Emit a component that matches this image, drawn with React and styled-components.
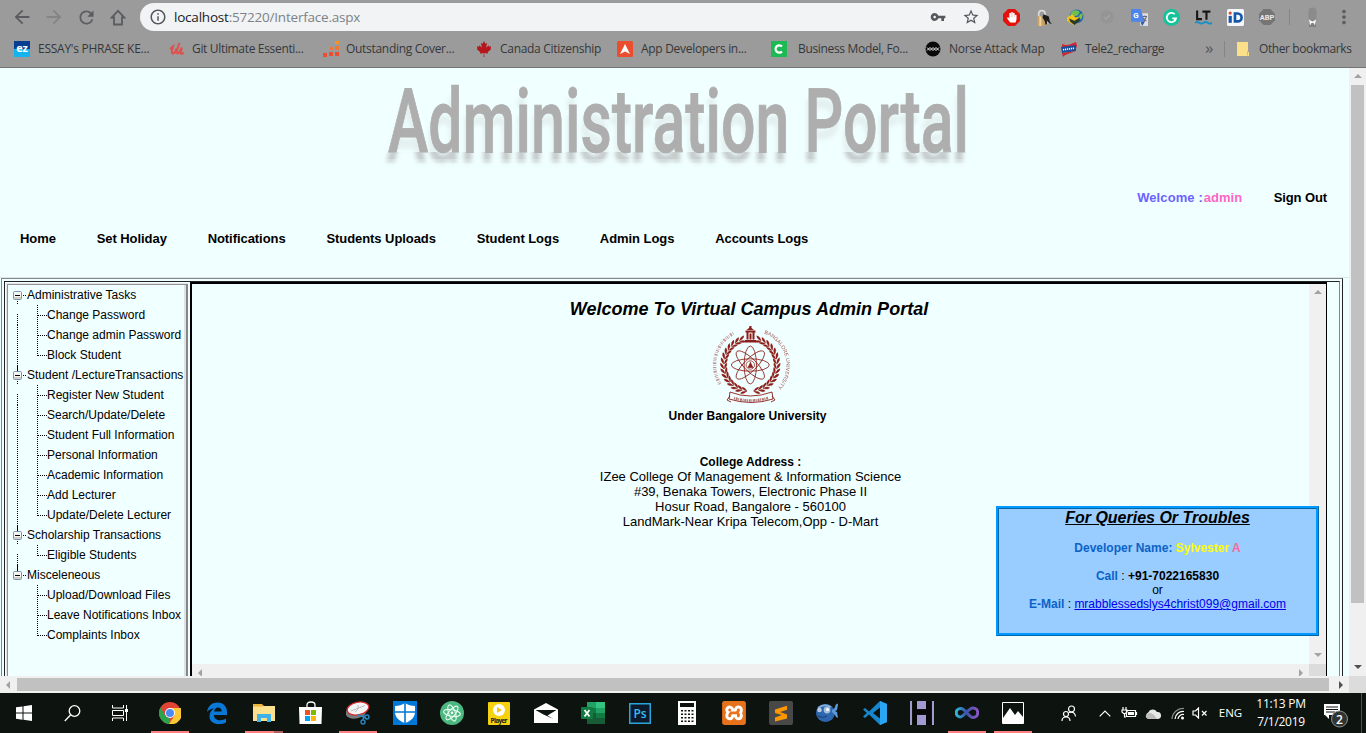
import React from "react";
import styled, { createGlobalStyle, css } from "styled-components";
import {
  MdArrowBack, MdArrowForward, MdRefresh, MdInfoOutline,
  MdVpnKey, MdStarBorder, MdMoreVert,
} from "react-icons/md";
import { FaCanadianMapleLeaf, FaHandPaper } from "react-icons/fa";
import { SiXampp } from "react-icons/si";

const UI = `"Open Sans", "Noto Sans", sans-serif`;
const ARIAL = `"Liberation Sans", Arial, sans-serif`;

const Global = createGlobalStyle`
  * { box-sizing: border-box; }
  html, body { margin: 0; padding: 0; overflow: hidden; }
  body { width: 1366px; height: 733px; font-family: ${ARIAL}; color: #000; }
  svg { display: block; flex: none; }
`;

const Screen = styled.div`
  width: 1366px;
  height: 733px;
  display: flex;
  flex-direction: column;
  overflow: hidden;
`;

/* ---------- browser chrome ---------- */

const Toolbar = styled.div`
  height: 34px;
  display: flex;
  align-items: center;
  background: #9b9b9b;
  color: #5a5c5f;
  padding-left: 6px;
`;

const NavButton = styled.span`
  width: 32px;
  height: 22px;
  display: flex;
  align-items: center;
  justify-content: center;
  opacity: ${(p) => (p.$dim ? 0.35 : 1)};
`;

const Omnibox = styled.div`
  width: 849px;
  height: 28px;
  margin: 0 12px 0 6px;
  padding: 0 9px 0 9px;
  border-radius: 14px;
  background: #f1f3f4;
  display: flex;
  align-items: center;
  color: #54575b;
`;

const Url = styled.span`
  flex: 1;
  margin-left: 7px;
  font: 13.5px/18px ${UI};
  letter-spacing: -0.21px;
  color: #7d8287;
  white-space: nowrap;
  b { font-weight: 400; color: #202124; }
`;

const OmniIcon = styled.span`
  margin-left: 16px;
`;

const Extension = styled.span`
  width: 32px;
  height: 20px;
  display: flex;
  align-items: center;
  justify-content: flex-start;
  padding-left: 2px;
`;

const Profile = styled.span`
  width: 43px;
  height: 20px;
`;

const ToolSeparator = styled.i`
  width: 1px;
  height: 16px;
  background: #858585;
`;

const BookmarkBar = styled.div`
  height: 34px;
  padding: 0 0 3px 14px;
  display: flex;
  align-items: center;
  background: #9b9b9b;
  border-bottom: 1px solid #737575;
`;

const Bookmark = styled.div`
  width: ${(p) => p.$w}px;
  display: flex;
  align-items: center;
  font: 12px/16px ${UI};
  letter-spacing: ${(p) => p.$ls || -0.3}px;
  color: #35373a;
  white-space: nowrap;
  svg { margin-right: ${(p) => p.$gap || 8}px; }
`;

const Chevrons = styled.span`
  width: 19px;
  color: #55575a;
  font: 17px/16px ${UI};
  padding-bottom: 3px;
`;

const Fav = ({ children, size = 16, box = "0 0 16 16" }) => (
  <svg width={size} height={size} viewBox={box}>{children}</svg>
);

function Browser() {
  return (
    <>
      <Toolbar>
        <NavButton><MdArrowBack size={22} /></NavButton>
        <NavButton $dim><MdArrowForward size={22} /></NavButton>
        <NavButton><MdRefresh size={21} /></NavButton>
        <NavButton>
          <svg width="16" height="17" viewBox="0 0 16 17">
            <path d="M8 1.800L1.800 8.500H4v7h8v-7h2.200z" fill="none" stroke="currentColor" strokeWidth="1.800" />
          </svg>
        </NavButton>
        <Omnibox>
          <MdInfoOutline size={18} />
          <Url><b>localhost</b>:57220/Interface.aspx</Url>
          <OmniIcon><MdVpnKey size={16} /></OmniIcon>
          <OmniIcon><MdStarBorder size={18} /></OmniIcon>
        </Omnibox>
        <Extension>
          <Fav size={17}>
            <path d="M4.700 0h6.600L16 4.700v6.600L11.300 16H4.700L0 11.300V4.700z" fill="#e3120b" />
            <g transform="translate(3.300 2.800) scale(.56)"><FaHandPaper size={18} color="#fff" /></g>
          </Fav>
        </Extension>
        <Extension>
          <Fav size={17}>
            <path d="M3.500 7V4.500a3 3 0 0 1 6 0V7" fill="none" stroke="#d9d9d9" strokeWidth="1.600" />
            <path d="M2 7h8v9H2z" fill="#c9a063" /><path d="M4 7h2v9H4z" fill="#ecd29c" />
            <path d="M8 5l5 2 1 5 2 2-4-1-2 2-1-4-2-3z" fill="#1d1d1d" /><path d="M11 11l2 2-1 1z" fill="#fff" />
          </Fav>
        </Extension>
        <Extension>
          <Fav size={17}>
            <circle cx="9" cy="7" r="6.500" fill="#2563b5" />
            <path d="M4 3c3-3 7-2 8 0l-2 3-5 1-2-1z" fill="#6cc04f" /><path d="M12 5l3-1-1 5-4 2z" fill="#7cc142" />
            <path d="M0 8l5-3 3 3 3-1-1 5-4 3-6-4z" fill="#f1c419" /><path d="M2 9l5 2 5-3v3l-5 4-4-3z" fill="#2d3a26" />
          </Fav>
        </Extension>
        <Extension>
          <Fav><circle cx="8" cy="8" r="6.700" fill="#959595" /><path d="M5 8l2 2 4-4" fill="none" stroke="#a3a3a3" strokeWidth="1.500" /></Fav>
        </Extension>
        <Extension>
          <Fav size={17}>
            <path d="M7 4h9v12H9z" fill="#dedede" /><path d="M0 1q0-1 1-1h8l4 12H1q-1 0-1-1z" fill="#4d86e8" />
            <path d="M9 12h4l-2.500 4z" fill="#3159a8" />
            <text x="2" y="8.500" fontSize="7.500" fontWeight="700" fill="#fff" fontFamily="Roboto">G</text>
            <path d="M11 7h4M13 6v1M14.500 7.500L12 12M11.500 8.500l3 3" stroke="#667" fill="none" />
          </Fav>
        </Extension>
        <Extension>
          <Fav size={17}><circle cx="8" cy="8" r="8" fill="#14c39a" /><path d="M11 4.800A4.400 4.400 0 1 0 12.300 8.800H8.800M12.300 8.800l-1.600 2.100" fill="none" stroke="#fff" strokeWidth="1.700" /></Fav>
        </Extension>
        <Extension>
          <Fav size={17}>
            <path d="M2 1.500v8h4.500M7 2.500h7.500M10.800 2.500v7.500" fill="none" stroke="#171717" strokeWidth="2" />
            <path d="M0 13q2-1.500 4 0t4 0 4 0 4 0" fill="none" stroke="#188fc7" strokeWidth="1.700" />
          </Fav>
        </Extension>
        <Extension>
          <Fav size={17}>
            <rect width="16" height="16" rx="1.500" fill="#f5f7fa" />
            <path d="M1.500 6.500h3V13h-3z" fill="#1457a8" /><circle cx="3" cy="3.800" r="1.500" fill="#e44b2e" />
            <path d="M7.500 4.200h2.500a3.700 3.700 0 0 1 0 7.500H7.500z" fill="none" stroke="#1457a8" strokeWidth="2.500" />
          </Fav>
        </Extension>
        <Extension>
          <Fav>
            <path d="M4.700 0h6.600L16 4.700v6.600L11.300 16H4.700L0 11.300V4.700z" fill="#757575" />
            <text x="8" y="10.700" textAnchor="middle" fontSize="7.500" fontWeight="700" fill="#e9e9e9" fontFamily="Roboto">ABP</text>
          </Fav>
        </Extension>
        <ToolSeparator />
        <Profile>
          <svg width="32" height="20" viewBox="0 0 32 20">
            <path d="M18.500 11V4q0-3.500 4-3.500t4 3.500v7q0 2-4 2t-4-2z" fill="#8b8b8b" />
            <path d="M20 13h5l1 3v4h-7v-4z" fill="#808080" /><path d="M19 12.500l3.500 2 3.500-2-1 6-1.500-2.500h-2L20 18.500z" fill="#f4f4f4" />
          </svg>
        </Profile>
        <MdMoreVert size={22} />
      </Toolbar>
      <BookmarkBar>
        <Bookmark $w={155} $ls={-0.26}>
          <Fav><rect width="16" height="8" fill="#063e91" /><rect y="8" width="16" height="8" fill="#16b4ef" />
            <text x="8" y="11" textAnchor="middle" fontSize="11" fontWeight="700" fill="#fff" fontFamily="Open Sans">ez</text></Fav>
          ESSAY's PHRASE KE...
        </Bookmark>
        <Bookmark $w={154} $gap={7} $ls={-0.33}>
          <Fav><path d="M1 8l3-2.500-1.200 5q0 3.500 3 1l2-4M10.500 2L7.800 9.500q-.5 4 2 2.500l3-5.500-1 5q0 3 3 0" fill="none" stroke="#e0504d" strokeWidth="2" /></Fav>
          Git Ultimate Essenti...
        </Bookmark>
        <Bookmark $w={153} $gap={7}>
          <Fav>
            <path d="M12 0h4v3h-4z" fill="#f79320" /><path d="M7 6h3v3H7zM12 5h4v4h-4z" fill="#ee7733" />
            <path d="M0 12h4v4H0zM6 11h4v4H6zM12 11h4v4h-4z" fill="#e94d33" />
          </Fav>
          Outstanding Cover...
        </Bookmark>
        <Bookmark $w={141}><FaCanadianMapleLeaf size={16} color="#b5171c" />Canada Citizenship</Bookmark>
        <Bookmark $w={154}>
          <Fav><rect width="16" height="16" rx="1.500" fill="#ea4e2e" /><path d="M8 3l5 10-5-2.500L3 13z" fill="#fff" /></Fav>
          App Developers in...
        </Bookmark>
        <Bookmark $w={154} $gap={11} $ls={-0.33}>
          <Fav><rect width="16" height="16" fill="#1db954" /><path d="M11 5.500A3.700 3.700 0 1 0 11 10.500" fill="none" stroke="#fff" strokeWidth="2.200" /></Fav>
          Business Model, Fo...
        </Bookmark>
        <Bookmark $w={136} $ls={-0.25}>
          <Fav><circle cx="8" cy="8" r="7.500" fill="#090909" />
            <path d="M2 6.500l3 3 3-3 3 3 3-3M2 9.500l3-3 3 3 3-3 3 3" fill="none" stroke="#fff" strokeWidth=".9" strokeLinejoin="round" /></Fav>
          Norse Attack Map
        </Bookmark>
        <Bookmark $w={144} $ls={-0.4}>
          <Fav><path d="M1 3q5 2 9 0l5-2 1 4-1 2H1z" fill="#d4272e" /><path d="M0 6l15-2v6L1 12z" fill="#1b4f9e" /><path d="M1 12l14-2-11 4-2 2z" fill="#c9272d" /><path d="M2 8.800l11-1.600" stroke="#fff" strokeWidth="1.600" strokeDasharray="1.200 .8" /></Fav>
          Tele2_recharge
        </Bookmark>
        <Chevrons>»</Chevrons>
        <ToolSeparator />
        <Bookmark $w={140} $gap={6} $ls={-0.4}>
          <svg width="28" height="16" viewBox="0 0 28 16"><path d="M12 1h11v10h1v4H12z" fill="#fbe08a" /><path d="M22.500 10v4.500" stroke="#e5bd4d" /></svg>
          Other bookmarks
        </Bookmark>
      </BookmarkBar>
    </>
  );
}

/* ---------- scroll bars ---------- */

const VBar = styled.div`
  width: 17px;
  flex: none;
  display: flex;
  flex-direction: column;
  align-items: center;
  justify-content: space-between;
  background: #f0f0f0;
  padding: 6px 0 7px;
`;
const VThumb = styled.div`
  width: 13px;
  height: 518px;
  margin: 7px 0 auto;
  background: #c1c1c1;
`;
const HBar = styled.div`
  height: 17px;
  flex: none;
  display: flex;
  align-items: center;
  justify-content: space-between;
  background: #f0f0f0;
`;
const HThumb = styled.div`
  width: 1312px;
  height: 13px;
  margin: 0 auto 0 1px;
  background: #c1c1c1;
`;
const Corner = styled.div`
  width: 17px;
  height: 17px;
  background: #dcdcdc;
`;
const Arrow = styled.i`
  width: 0;
  height: 0;
  border: 4px solid transparent;
  ${(p) => p.$dir === "up" && css`border-top: 0; border-bottom-color: ${p.$c};`}
  ${(p) => p.$dir === "down" && css`border-bottom: 0; border-top-color: ${p.$c};`}
  ${(p) => p.$dir === "left" && css`border-left: 0; border-right-color: ${p.$c}; margin: 0 6px;`}
  ${(p) => p.$dir === "right" && css`border-right: 0; border-left-color: ${p.$c}; margin: 0 6px;`}
`;

/* ---------- web page ---------- */

const Viewport = styled.div`
  height: 608px;
  flex: none;
  display: flex;
  background: #f0ffff;
`;
const Page = styled.div`
  width: 1349px;
  height: 608px;
  overflow: hidden;
  display: flex;
  flex-direction: column;
`;
const Banner = styled.header`
  height: 120px;
  padding-left: 380px;
`;
const Account = styled.div`
  height: 20px;
  display: flex;
  align-items: center;
  justify-content: flex-end;
  padding-right: 22px;
  font: bold 13px/20px ${ARIAL};
  letter-spacing: -0.1px;
`;
const Greeting = styled.span`
  color: #6c63ff;
  letter-spacing: 0.1px;
  margin-right: 1px;
`;
const UserName = styled.span`
  color: #ff66c4;
  letter-spacing: 0;
  margin-right: 31.5px;
`;
const Menu = styled.nav`
  height: 70px;
  padding: 22px 0 0 20px;
  display: flex;
  gap: 40.8px;
  font: bold 13px/18px ${ARIAL};
  letter-spacing: -0.06px;
  border-bottom: 1px solid #dbe6e6;
`;
const OuterFrame = styled.div`
  width: 1342px;
  margin-left: 1px;
  flex: 1;
  min-height: 0;
  border: 1px solid #85868a;
  border-right-color: #222;
  border-bottom: 0;
  padding: 2px 2px 0;
`;
const InnerFrame = styled.div`
  height: 100%;
  display: flex;
  border: 1px solid #222;
  border-right-color: #85868a;
  border-bottom: 0;
`;
const Sidebar = styled.aside`
  width: 182px;
  margin-left: 1px;
  margin-top: 1px;
  border: solid #e6e6e6;
  border-width: 1px 0 0 1px;
  border-right: 0;
`;
const Tree = styled.div`
  height: 100%;
  border: 1px solid #929292;
  border-right: 2px solid #85868a;
  border-bottom: 0;
  box-shadow: inset -2px 0 #dfe2e2;
`;
const TreeRow = styled.div`
  height: 20px;
  display: flex;
  align-items: center;
  font: 12px/20px ${ARIAL};
  white-space: nowrap;
  margin-left: -1px;
`;

const dots = { stroke: "#000", strokeWidth: 1, strokeDasharray: "1 1", fill: "none" };

const Trunk = ({ from = 0 }) => (
  <svg width="20" height="20"><path d={`M10.500 ${from}V20`} {...dots} /></svg>
);
const Blank = styled.span`
  width: 20px;
`;
const Branch = ({ last }) => (
  <svg width="20" height="20">
    <path d={`M10.500 0V${last ? 11 : 20}`} {...dots} />
    <path d="M11 10.500H20" {...dots} />
  </svg>
);
const Toggle = ({ first, last }) => (
  <svg width="20" height="20">
    {!first && <path d="M10.500 0V6" stroke="#000" />}
    {!last && <path d="M10.500 16V20" {...dots} />}
    <path d="M16 10.500H20" {...dots} />
    <rect x="6.500" y="6.500" width="8" height="8" rx="1" fill="#f4f4f0" stroke="#7595bb" />
    <path d="M7 12h7v2H7z" fill="#cfccc2" />
    <path d="M8 10.500H13" stroke="#000" />
  </svg>
);

const groups = [
  ["Administrative Tasks", ["Change Password", "Change admin Password", "Block Student"]],
  ["Student /LectureTransactions", [
    "Register New Student", "Search/Update/Delete", "Student Full Information",
    "Personal Information", "Academic Information", "Add Lecturer", "Update/Delete Lecturer"]],
  ["Scholarship Transactions", ["Eligible Students"]],
  ["Misceleneous", ["Upload/Download Files", "Leave Notifications Inbox", "Complaints Inbox"]],
];

const Frame = styled.section`
  position: relative;
  width: 1137px;
  margin-left: 2px;
  border: 2px solid #000;
  border-right-width: 1px;
  border-bottom: 0;
  display: flex;
  flex-direction: column;
`;
const FrameTop = styled.div`
  height: 380px;
  flex: none;
  display: flex;
`;
const Welcome = styled.main`
  flex: 1;
  display: flex;
  flex-direction: column;
  align-items: center;
  padding-top: 14px;
`;
const Heading = styled.h1`
  margin: 0 3px 5px 0;
  font: italic bold 18px/22px ${ARIAL};
  letter-spacing: 0.02px;
  white-space: nowrap;
`;
const Affiliation = styled.p`
  margin: 2.5px 6px 0 0;
  font: bold 12px/15px ${ARIAL};
`;
const Address = styled.address`
  margin-top: 31.5px;
  text-align: center;
  font: normal 12px/15px ${ARIAL};
  white-space: nowrap;
  b { display: block; height: 14px; }
  div { font-size: 13px; }
`;
const QueryBox = styled.div`
  position: absolute;
  right: 7px;
  top: 222px;
  width: 323px;
  height: 130px;
  border: 3px ridge #0099ff;
  background: #99ccff;
  text-align: center;
  font: 12px/14px ${ARIAL};
  color: #000;
  white-space: nowrap;
  display: flex;
  flex-direction: column;
`;
const QueryTitle = styled.div`
  font: italic bold 16px/18px ${ARIAL};
  text-decoration: underline;
  margin-bottom: 14px;
`;
const Label = styled.span`
  color: #0b63c9;
  font-weight: ${(p) => (p.$plain ? 400 : 700)};
`;
const Line = styled.div`
  margin-bottom: ${(p) => (p.$gap ? 14 : 0)}px;
`;
const Mail = styled.span`
  color: #0000ee;
  text-decoration: underline;
`;
const Yellow = styled.span`
  color: #ffff00;
`;
const Pink = styled.span`
  color: #ff6699;
`;

function PortalLogo() {
  return (
    <svg width="600" height="118" viewBox="0 0 600 118">
      <defs>
        <filter id="reflect" filterUnits="userSpaceOnUse" x="0" y="0" width="600" height="118">
          <feOffset in="SourceAlpha" dx="-2" dy="11" result="o" />
          <feGaussianBlur in="o" stdDeviation="2" result="b" />
          <feFlood x="0" y="0" width="600" height="84" floodColor="#9c9696" floodOpacity=".14" result="f1" />
          <feFlood x="0" y="84" width="600" height="7" floodColor="#8c8484" floodOpacity=".42" result="f2" />
          <feFlood x="0" y="91" width="600" height="4" floodColor="#8c8484" floodOpacity=".3" result="f3" />
          <feFlood x="0" y="95" width="600" height="12" floodColor="#9c9696" floodOpacity=".16" result="f4" />
          <feMerge result="f"><feMergeNode in="f1" /><feMergeNode in="f2" /><feMergeNode in="f3" /><feMergeNode in="f4" /></feMerge>
          <feComposite in="f" in2="b" operator="in" result="s" />
          <feMerge><feMergeNode in="s" /><feMergeNode in="SourceGraphic" /></feMerge>
        </filter>
      </defs>
      <text x="8" y="84" fontSize="89" fontWeight="500" textLength="581" lengthAdjust="spacingAndGlyphs"
        fontFamily="Roboto, sans-serif" fill="#aeaeae" stroke="#aeaeae" strokeWidth=".8" filter="url(#reflect)">Administration Portal</text>
    </svg>
  );
}

function Emblem() {
  const red = "#8c1d18";
  const leaves = [];
  for (let i = 0; i < 15; i++) {
    const a = 20 + i * 10.600;
    [a, -a].forEach((d, k) => {
      const s = k ? -1 : 1;
      leaves.push(
        <g key={`${i}${k}`} transform={`rotate(${d} 38.300 40) translate(38.300 13.500)`}>
          <path d={`M${s * 2} 0q${s * -3} -4 ${s * -6} -3.200q${s * 1} 3 ${s * 6} 3.200zM${s * 2} .4q${s * -3} 3.600 ${s * -6} 2.600q${s * 1.500} -2.600 ${s * 6} -2.600z`} fill={red} stroke={red} strokeWidth=".3" />
        </g>
      );
    });
  }
  return (
    <svg width="78" height="81" viewBox="0 0 78 81">
      <defs><path id="ring" d="M52 8.500A33.500 33.500 0 0 1 62 66" /></defs>
      {leaves}
      {[0, 45, 90, 135].map((r) => (
        <ellipse key={r} cx="38.300" cy="40" rx="19" ry="6.200" fill="none" stroke={red} strokeWidth=".85" transform={`rotate(${r} 38.300 40)`} />
      ))}
      <circle cx="38.300" cy="40" r="4.200" fill="#f0ffff" stroke={red} strokeWidth=".7" />
      <path d="M36 42.500h5l-2.500-5zM38.300 36.500v3" fill={red} stroke={red} strokeWidth=".6" />
      <path d="M37.500 1h2v2l2.500 2h-7.500l2.500-2zM33.500 5.500h10v2h-10zM34.500 7.500h2v7h-2zM40.500 7.500h2v7h-2zM37.500 8.500h2v6h-2zM33 15h11v2.500H33z" fill={red} />
      <text fontSize="5.200" fill={red} opacity=".8" fontFamily="Liberation Sans"><textPath href="#ring" textLength="66">BANGALORE UNIVERSITY</textPath></text>
      <path d="M8 59A36 36 0 0 1 22 8" fill="none" stroke={red} strokeWidth="3.400" strokeDasharray="1 1 .5 1.400 1.800 1.200 .6 1" opacity=".45" />
      <path d="M18 67q20 8 42 0l1 7q-22 7-44 0zM18 71l-3 4 4 2M60 71l3 4-4 2" fill="none" stroke={red} strokeWidth=".9" />
      <path d="M22 73q16 5 34 0" fill="none" stroke={red} strokeWidth="2.500" strokeDasharray="1 .8 2 .6" opacity=".6" />
    </svg>
  );
}

function WebPage() {
  return (
    <Viewport>
      <Page>
        <Banner><PortalLogo /></Banner>
        <Account>
          <Greeting>Welcome :</Greeting><UserName>admin</UserName><span>Sign Out</span>
        </Account>
        <Menu>
          {["Home", "Set Holiday", "Notifications", "Students Uploads", "Student Logs", "Admin Logs", "Accounts Logs"].map((m) => (
            <span key={m}>{m}</span>
          ))}
        </Menu>
        <OuterFrame>
          <InnerFrame>
            <Sidebar>
              <Tree>
                {groups.map(([name, items], g) => {
                  const last = g === groups.length - 1;
                  return (
                    <React.Fragment key={name}>
                      <TreeRow><Toggle first={g === 0} last={last} />{name}</TreeRow>
                      {items.map((it, i) => (
                        <TreeRow key={it}>
                          {last ? <Blank /> : <Trunk from={i === 0 ? 9 : 0} />}
                          <Branch last={i === items.length - 1} />
                          {it}
                        </TreeRow>
                      ))}
                    </React.Fragment>
                  );
                })}
              </Tree>
            </Sidebar>
            <Frame>
              <FrameTop>
                <Welcome>
                  <Heading>Welcome To Virtual Campus Admin Portal</Heading>
                  <Emblem />
                  <Affiliation>Under Bangalore University</Affiliation>
                  <Address>
                    <b>College Address :</b>
                    <div>IZee College Of Management &amp; Information Science</div>
                    <div>#39, Benaka Towers, Electronic Phase II</div>
                    <div>Hosur Road, Bangalore - 560100</div>
                    <div>LandMark-Near Kripa Telecom,Opp - D-Mart</div>
                  </Address>
                </Welcome>
                <VBar><Arrow $dir="up" $c="#a3a3a3" /><Arrow $dir="down" $c="#a3a3a3" /></VBar>
              </FrameTop>
              <HBar>
                <Arrow $dir="left" $c="#a3a3a3" />
                <HBar><Arrow $dir="right" $c="#a3a3a3" /><Corner /></HBar>
              </HBar>
              <QueryBox>
                <QueryTitle>For Queries Or Troubles</QueryTitle>
                <Line $gap><Label>Developer Name: </Label><b><Yellow>Sylvester</Yellow> <Pink>A</Pink></b></Line>
                <Line><Label>Call</Label> : <b>+91-7022165830</b></Line>
                <Line>or</Line>
                <Line><Label>E-Mail</Label> : <Mail>mrabblessedslys4christ099@gmail.com</Mail></Line>
              </QueryBox>
            </Frame>
          </InnerFrame>
        </OuterFrame>
      </Page>
      <VBar>
        <Arrow $dir="up" $c="#a3a3a3" /><VThumb /><Arrow $dir="down" $c="#505050" />
      </VBar>
    </Viewport>
  );
}

/* ---------- taskbar ---------- */

const Taskbar = styled.footer`
  height: 40px;
  flex: none;
  display: flex;
  background: #0d130f;
  color: #fff;
`;
const underline = {
  one: "linear-gradient(#ff8080, #ff8080)",
  many: "linear-gradient(90deg, #ff8080 29px, #b56060 29px)",
};
const Task = styled.div`
  width: ${(p) => p.$w || 47}px;
  height: 40px;
  display: flex;
  align-items: center;
  justify-content: center;
  background: ${(p) => (p.$open ? `${underline[p.$open]} 50% 100% / 38px 2px no-repeat` : "none")};
`;
const TrayText = styled.div`
  width: ${(p) => p.$w}px;
  font: ${(p) => p.$fs || 12}px/18px ${UI};
  letter-spacing: ${(p) => p.$ls || 0}px;
  text-align: center;
  align-self: center;
  white-space: nowrap;
`;
const Spacer = styled.div`
  width: ${(p) => p.$w}px;
`;
const ShowDesktop = styled.i`
  margin-left: auto;
  width: 5px;
  border-left: 1px solid #4c504d;
`;

const I = ({ children, s = 24, w, h }) => (
  <svg width={w || s} height={h || s} viewBox={`0 0 ${w || s} ${h || s}`}>{children}</svg>
);

const apps = [
  ["one", <I s={22}>
    <circle cx="11" cy="11" r="11" fill="#e14335" />
    <path d="M1.500 5.500L6.200 13.700 11 16.500 10 22A11 11 0 0 1 1.500 5.500z" fill="#2ba24c" />
    <path d="M11 6h10.800A11 11 0 0 1 10 22l5.500-8.500z" fill="#fcc934" />
    <circle cx="11" cy="11" r="5" fill="#fff" /><circle cx="11" cy="11" r="4" fill="#4a8af4" /></I>],
  ["", <I s={22}><path d="M1 10C2 3.500 6.500.5 11.500.5 18 .5 21 5.500 21 10v3H8c0 4 3 5.200 6 5.200 2.500 0 4.500-.7 6-1.700v4c-2 1-4.500 1.500-7 1.500C7 22 3.500 19 3.500 14.200 3.500 10.500 5.500 8 8.200 6.600 5.500 6.800 2.500 8 1 10zM8.200 9.500h7.500C15.700 7 14 5.600 12 5.600S8.500 7.300 8.200 9.500z" fill="#0a78d7" /></I>],
  ["many", <I w={22} h={20}>
    <path d="M0 1h9l2 2H0z" fill="#e9b53a" /><path d="M0 3h22v15H0z" fill="#fbe08e" /><path d="M0 3h10v1H0z" fill="#f3ca57" />
    <path d="M4 11h14v8h-4v-4H8v4H4z" fill="#3fb2e8" /></I>],
  ["", <I w={24} h={24}>
    <path d="M8 7V4q0-3 4-3t4 3v3" fill="none" stroke="#fff" strokeWidth="1.300" /><path d="M0 6h23l-.5 17H.5z" fill="#fff" />
    <path d="M6 9h5v5H6z" fill="#f25022" /><path d="M12 9h5v5h-5z" fill="#7fba00" /><path d="M6 15h5v5H6z" fill="#00a4ef" /><path d="M12 15h5v5h-5z" fill="#ffb900" /></I>],
  ["one", <I w={24} h={24}>
    <ellipse cx="10" cy="11" rx="10.500" ry="6.500" transform="rotate(-12 10 11)" fill="#777c80" />
    <ellipse cx="12" cy="7.500" rx="11" ry="6.300" transform="rotate(-12 12 7.500)" fill="#f4f4f4" stroke="#d52b2b" strokeWidth="1.300" />
    <path d="M5 10L19 4.500M9 11l3-3V4" stroke="#b9bec2" fill="none" />
    <path d="M12 14l6 2 3 2M18 13l-1 6" stroke="#2a86bf" strokeWidth="1.500" fill="none" /><circle cx="21" cy="16" r="2" fill="none" stroke="#2a86bf" strokeWidth="1.400" /><circle cx="17" cy="21" r="2" fill="none" stroke="#2a86bf" strokeWidth="1.400" /></I>],
  ["", <I><path d="M0 0h24v24H0z" fill="#0078d7" /><path d="M12 2c3 2 6 3 10 3v6c0 5-4 9-10 11C6 20 2 16 2 11V5c4 0 7-1 10-3z" fill="#fff" /><path d="M12 2v20M2 11h20" stroke="#0078d7" strokeWidth="1.600" /></I>],
  ["", <I><circle cx="12" cy="12" r="12" fill="#4db780" />
    {[10, 70, 130].map((r) => <ellipse key={r} cx="12" cy="12" rx="8.500" ry="3.300" fill="none" stroke="#e5fff0" strokeWidth="1.100" transform={`rotate(${r} 12 12)`} />)}<circle cx="12" cy="12" r="1.400" fill="#fff" /></I>],
  ["", <I w={22} h={23}><rect width="22" height="23" rx="1" fill="#f5d20e" /><circle cx="11" cy="8" r="6" fill="#fff" /><path d="M9 5l5 3-5 3z" fill="#f2c811" />
    <text x="11" y="20.500" textAnchor="middle" fontSize="6.500" fontWeight="700" fill="#222" fontFamily="Open Sans" textLength="17">Player</text></I>],
  ["", <I w={24} h={20}><path d="M0 6.500L12 0l12 6.500V20H0z" fill="#fff" /><path d="M1.500 7h21l-9 5.500 6 3.500-10-4.500z" fill="#0d130f" /></I>],
  ["", <I w={24} h={22}><path d="M6 0h18v22H6z" fill="#185c37" /><path d="M6 0h9v7H6z" fill="#21a366" /><path d="M15 0h9v6h-9z" fill="#33c481" /><path d="M15 6h9v5h-9z" fill="#21a366" /><path d="M6 6h9v5H6z" fill="#107c41" /><path d="M15 11h9v5h-9z" fill="#107c41" /><rect y="5" width="12" height="12" rx="1" fill="#107c41" />
    <path d="M3.500 8l5 6.500M8.500 8l-5 6.500" stroke="#fff" strokeWidth="1.800" /></I>],
  ["", <I w={22} h={21}><rect x=".75" y=".75" width="20.500" height="19.500" fill="#0c1a2b" stroke="#2ba4dc" strokeWidth="1.500" /><text x="11" y="14.500" textAnchor="middle" fontSize="12" fill="#39bdf5" fontFamily="Open Sans" fontWeight="600">Ps</text></I>],
  ["", <I w={18} h={24}><path d="M0 0h18v24H0z" fill="#fff" /><path d="M2 2h14v4H2z" fill="#0d130f" />
    {[9, 12.500, 16, 19.500].map((y) => <path key={y} d={`M3 ${y}h2v1.600H3zM6.500 ${y}h2v1.600h-2zM10 ${y}h2v1.600h-2zM13.500 ${y}h2v1.600h-2z`} fill="#0d130f" />)}</I>],
  ["", <I><rect x="1" y="1" width="22" height="22" rx="2" fill="#fff" /><SiXampp size={24} color="#e8721c" /></I>],
  ["", <I><rect width="24" height="24" rx="2" fill="#484848" /><g transform="translate(5 4)"><path d="M1 4.500L13 .8v4L6 7l7 2.500v4L1 16.500v-4L8 10 1 8z" fill="#ff9800" /></g></I>],
  ["", <I><ellipse cx="9.500" cy="12" rx="9.500" ry="9" fill="#2c66ae" /><path d="M2 7q6-5 13-1" stroke="#80addc" strokeWidth="2" fill="none" /><path d="M16 9q3-1 3.500-5 2.500-3 2.500 0l-1 5-2 1 2 1 1 6q-2 0-3-3l-3-3z" fill="#5d9bd8" /><circle cx="3.500" cy="9" r="2.300" fill="#b8cbe2" /><circle cx="11" cy="9" r="3.400" fill="#a3bedb" /><circle cx="11.500" cy="8.500" r="1.500" fill="#fff" /><path d="M2 15q5 3 9 0" stroke="#183e70" fill="none" /></I>],
  ["", <I><path d="M17 0l7 3v18l-7 3L6 13.500 2 17 0 15.500 3.800 12 0 8.500 2 7l4 3.500zM17 6.500L10 12l7 5.500z" fill="#1687cc" /><path d="M17 0l7 3v18l-7 3z" fill="#2aa5f2" /></I>],
  ["", <I><path d="M0 0h2v24H0zM22 0h2v24h-2zM7 0h9v8H7zM7 14h9v10H7z" fill="#9f9bd1" /><path d="M3 0h4v24H3zM16 0h5v24h-5zM3 9h18v4H3z" fill="#080808" /></I>, 46],
  ["one", <I w={24} h={14}><defs><linearGradient id="vs"><stop offset="0" stopColor="#30b7d8" /><stop offset=".45" stopColor="#3853a8" /><stop offset="1" stopColor="#8b55c6" /></linearGradient></defs>
    <path d="M12 7C9 3 7 2.500 5.500 2.500a4 4 0 0 0 0 8.500C9 11 13 2 18 2a4.500 4.500 0 0 1 0 9.500c-2.500 0-4-2-6-4.500z" fill="none" stroke="url(#vs)" strokeWidth="3" /></I>, 45],
  ["one", <I w={22} h={22}><path d="M.5.5h21v21H.5z" fill="#0d130f" stroke="#fff" /><path d="M1 16l7-10 5 7 3-4 5 6v6H1z" fill="#fff" /></I>, 46],
];

function Tray() {
  const st = { stroke: "#fff", fill: "none", strokeWidth: 1.2 };
  return (
    <>
      <Spacer $w={23.500} />
      <Task $w={20}><I w={16} h={17}><circle cx="10.500" cy="4" r="3" {...st} /><path d="M8 7.500q6-1.500 6.500 4" {...st} /><circle cx="5" cy="9" r="2.500" {...st} /><path d="M1 16q0-4 4-4t4 4" {...st} /></I></Task>
      <Spacer $w={14} />
      <Task $w={24}><I w={12} h={7}><path d="M.7 6.300L6 1l5.300 5.300" {...st} /></I></Task>
      <Task $w={24}><I w={17} h={12}><path d="M5.500 3.500h9v6h-9zM15.500 5v3" {...st} /><path d="M7 5h6v3H7z" fill="#fff" /><path d="M2 0v3M5 0v3M1 3h5v2l-1.500 1.500h-2L1 5zM3.500 7v3H5" {...st} /></I></Task>
      <Task $w={24}><I w={16} h={11}><path d="M3.500 11a3.500 3.500 0 0 1-.3-6.500A5 5 0 0 1 12 4a3.500 3.500 0 0 1 1 7z" fill="#e8e8e8" /><path d="M4 5q4-1 8 6H3.500Q0 10 1 7z" fill="#bdbdbd" /></I></Task>
      <Task $w={25}><I w={14} h={13}><path d="M1 12A11 11 0 0 1 13 1.500" {...st} stroke="#8b8e8c" /><path d="M4 12a8 8 0 0 1 9-7.500M7 12a5 5 0 0 1 6-4.500" {...st} /><circle cx="11.500" cy="11" r="1.500" fill="#fff" /></I></Task>
      <Task $w={20}><I w={16} h={12}><path d="M1 4h2.500L6.500 1v10L3.500 8H1z" {...st} /><path d="M10 4l4.500 4.500M14.500 4L10 8.500" {...st} /></I></Task>
      <Spacer $w={3} />
      <TrayText $w={35} $fs={11.500}>ENG</TrayText>
      <Spacer $w={3} />
      <TrayText $w={60} $ls={-0.3}>11:13 PM<br />7/1/2019</TrayText>
      <Spacer $w={11} />
      <Task $w={28}><I w={26} h={29}><path d="M1 5h16v11H6v4l-4-4H1z" fill="#fff" /><path d="M3 8h12M3 10.500h12M3 13h9" stroke="#0d130f" /><circle cx="16.500" cy="20" r="8" fill="#303532" stroke="#8d908e" /><text x="16.500" y="24.500" textAnchor="middle" fontSize="12" fontWeight="600" fill="#fff" fontFamily="Open Sans">2</text></I></Task>
      <ShowDesktop />
    </>
  );
}

export default function App() {
  return (
    <Screen>
      <Global />
      <Browser />
      <WebPage />
      <HBar>
        <Arrow $dir="left" $c="#a3a3a3" />
        <HThumb />
        <HBar><Arrow $dir="right" $c="#505050" /><Corner /></HBar>
      </HBar>
      <Taskbar>
        <Task $w={48}><I s={16}><path d="M0 2.300L6.500 1.400V7.500H0zM7.500 1.200L16 0v7.500H7.500zM0 8.500h6.500v6.200L0 13.700zM7.500 8.500H16V16l-8.500-1.200z" fill="#fff" /></I></Task>
        <Task $w={48}><I s={17}><circle cx="10.500" cy="6" r="5.300" fill="none" stroke="#fff" strokeWidth="1.300" /><path d="M6.500 10L.8 16" stroke="#fff" strokeWidth="1.300" /></I></Task>
        <Task $w={48}><I w={16} h={16}><path d="M.5 0v3h11V0M.5 16v-3h11v3M.5 5.500h11v5H.5zM14.500 0v16" fill="none" stroke="#fff" /><path d="M13 4h3v3h-3z" fill="#fff" /></I></Task>
        <Spacer $w={2.500} />
        {apps.map(([open, icon, w], i) => <Task key={i} $open={open} $w={w}>{icon}</Task>)}
        <Tray />
      </Taskbar>
    </Screen>
  );
}
